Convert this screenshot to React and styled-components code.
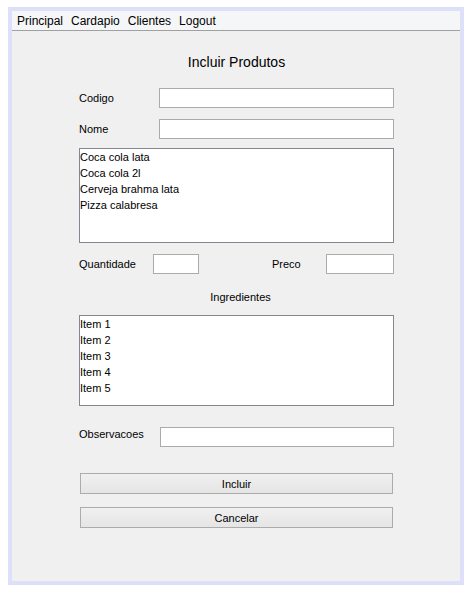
import React from "react";
import styled, { createGlobalStyle } from "styled-components";

const Global = createGlobalStyle`
  body {
    margin: 0;
    background: #ffffff;
    font-family: "Liberation Sans", Arial, sans-serif;
    color: #000000;
  }
`;

const Window = styled.div`
  margin: 7px 0 0 8px;
  width: 456px;
  height: 578px;
  box-sizing: border-box;
  border: 4px solid #dedff9;
  background: #f0f0f0;
  display: flex;
  flex-direction: column;
`;

const MenuBar = styled.div`
  height: 19px;
  background: #f5f6f7;
  border-bottom: 1px solid #a0a0a0;
  display: flex;
  align-items: center;
  gap: 8px;
  padding-left: 5px;
  font-size: 12px;
`;

const MenuItem = styled.span`
  cursor: default;
`;

const Form = styled.div`
  display: flex;
  flex-direction: column;
  width: 315px;
  margin-left: 67px;
`;

const Title = styled.div`
  margin-top: 22px;
  height: 18px;
  line-height: 18px;
  text-align: center;
  font-size: 14px;
`;

const Row = styled.div`
  display: flex;
  align-items: center;
  height: 20px;
  margin-top: ${(p) => p.$top}px;
  font-size: 11px;
`;

const Label = styled.span`
  width: ${(p) => p.$width || 80}px;
  flex-shrink: 0;
  margin-top: ${(p) => (p.$raise ? -6 : 0)}px;
`;

const Input = styled.div`
  height: 20px;
  box-sizing: border-box;
  background: #ffffff;
  border: 1px solid #ababab;
  width: ${(p) => (p.$width ? `${p.$width}px` : "auto")};
  flex: ${(p) => (p.$width ? "none" : "1")};
`;

const Spacer = styled.div`
  flex: 1;
`;

const ListBox = styled.div`
  margin-top: ${(p) => p.$top}px;
  height: ${(p) => p.$height}px;
  box-sizing: border-box;
  background: #ffffff;
  border: 1px solid #828790;
  padding: 0;
  font-size: 11px;
`;

const ListItem = styled.div`
  height: 16px;
  line-height: 16px;
`;

const Caption = styled.div`
  margin-top: 16px;
  height: 14px;
  line-height: 14px;
  text-align: center;
  font-size: 11px;
  padding-left: 8px;
`;

const Button = styled.button`
  margin-top: ${(p) => p.$top}px;
  margin-left: 1px;
  width: 313px;
  height: 21px;
  box-sizing: border-box;
  border: 1px solid #acacac;
  border-radius: 0;
  background: linear-gradient(#f0f0f0, #e5e5e5);
  font-family: "Liberation Sans", Arial, sans-serif;
  font-size: 11px;
  color: #000000;
  padding: 0;
`;

const products = ["Coca cola lata", "Coca cola 2l", "Cerveja brahma lata", "Pizza calabresa"];
const items = ["Item 1", "Item 2", "Item 3", "Item 4", "Item 5"];

export default function App() {
  return (
    <>
      <Global />
      <Window>
        <MenuBar>
          <MenuItem>Principal</MenuItem>
          <MenuItem>Cardapio</MenuItem>
          <MenuItem>Clientes</MenuItem>
          <MenuItem>Logout</MenuItem>
        </MenuBar>
        <Form>
          <Title>Incluir Produtos</Title>
          <Row $top={17}>
            <Label>Codigo</Label>
            <Input />
          </Row>
          <Row $top={11}>
            <Label>Nome</Label>
            <Input />
          </Row>
          <ListBox $top={9} $height={95}>
            {products.map((p) => (
              <ListItem key={p}>{p}</ListItem>
            ))}
          </ListBox>
          <Row $top={11}>
            <Label $width={74}>Quantidade</Label>
            <Input $width={46} />
            <Spacer />
            <Label $width={54}>Preco</Label>
            <Input $width={68} />
          </Row>
          <Caption>Ingredientes</Caption>
          <ListBox $top={11} $height={91}>
            {items.map((i) => (
              <ListItem key={i}>{i}</ListItem>
            ))}
          </ListBox>
          <Row $top={21}>
            <Label $width={81} $raise>Observacoes</Label>
            <Input />
          </Row>
          <Button $top={26}>Incluir</Button>
          <Button $top={13}>Cancelar</Button>
        </Form>
      </Window>
    </>
  );
}
